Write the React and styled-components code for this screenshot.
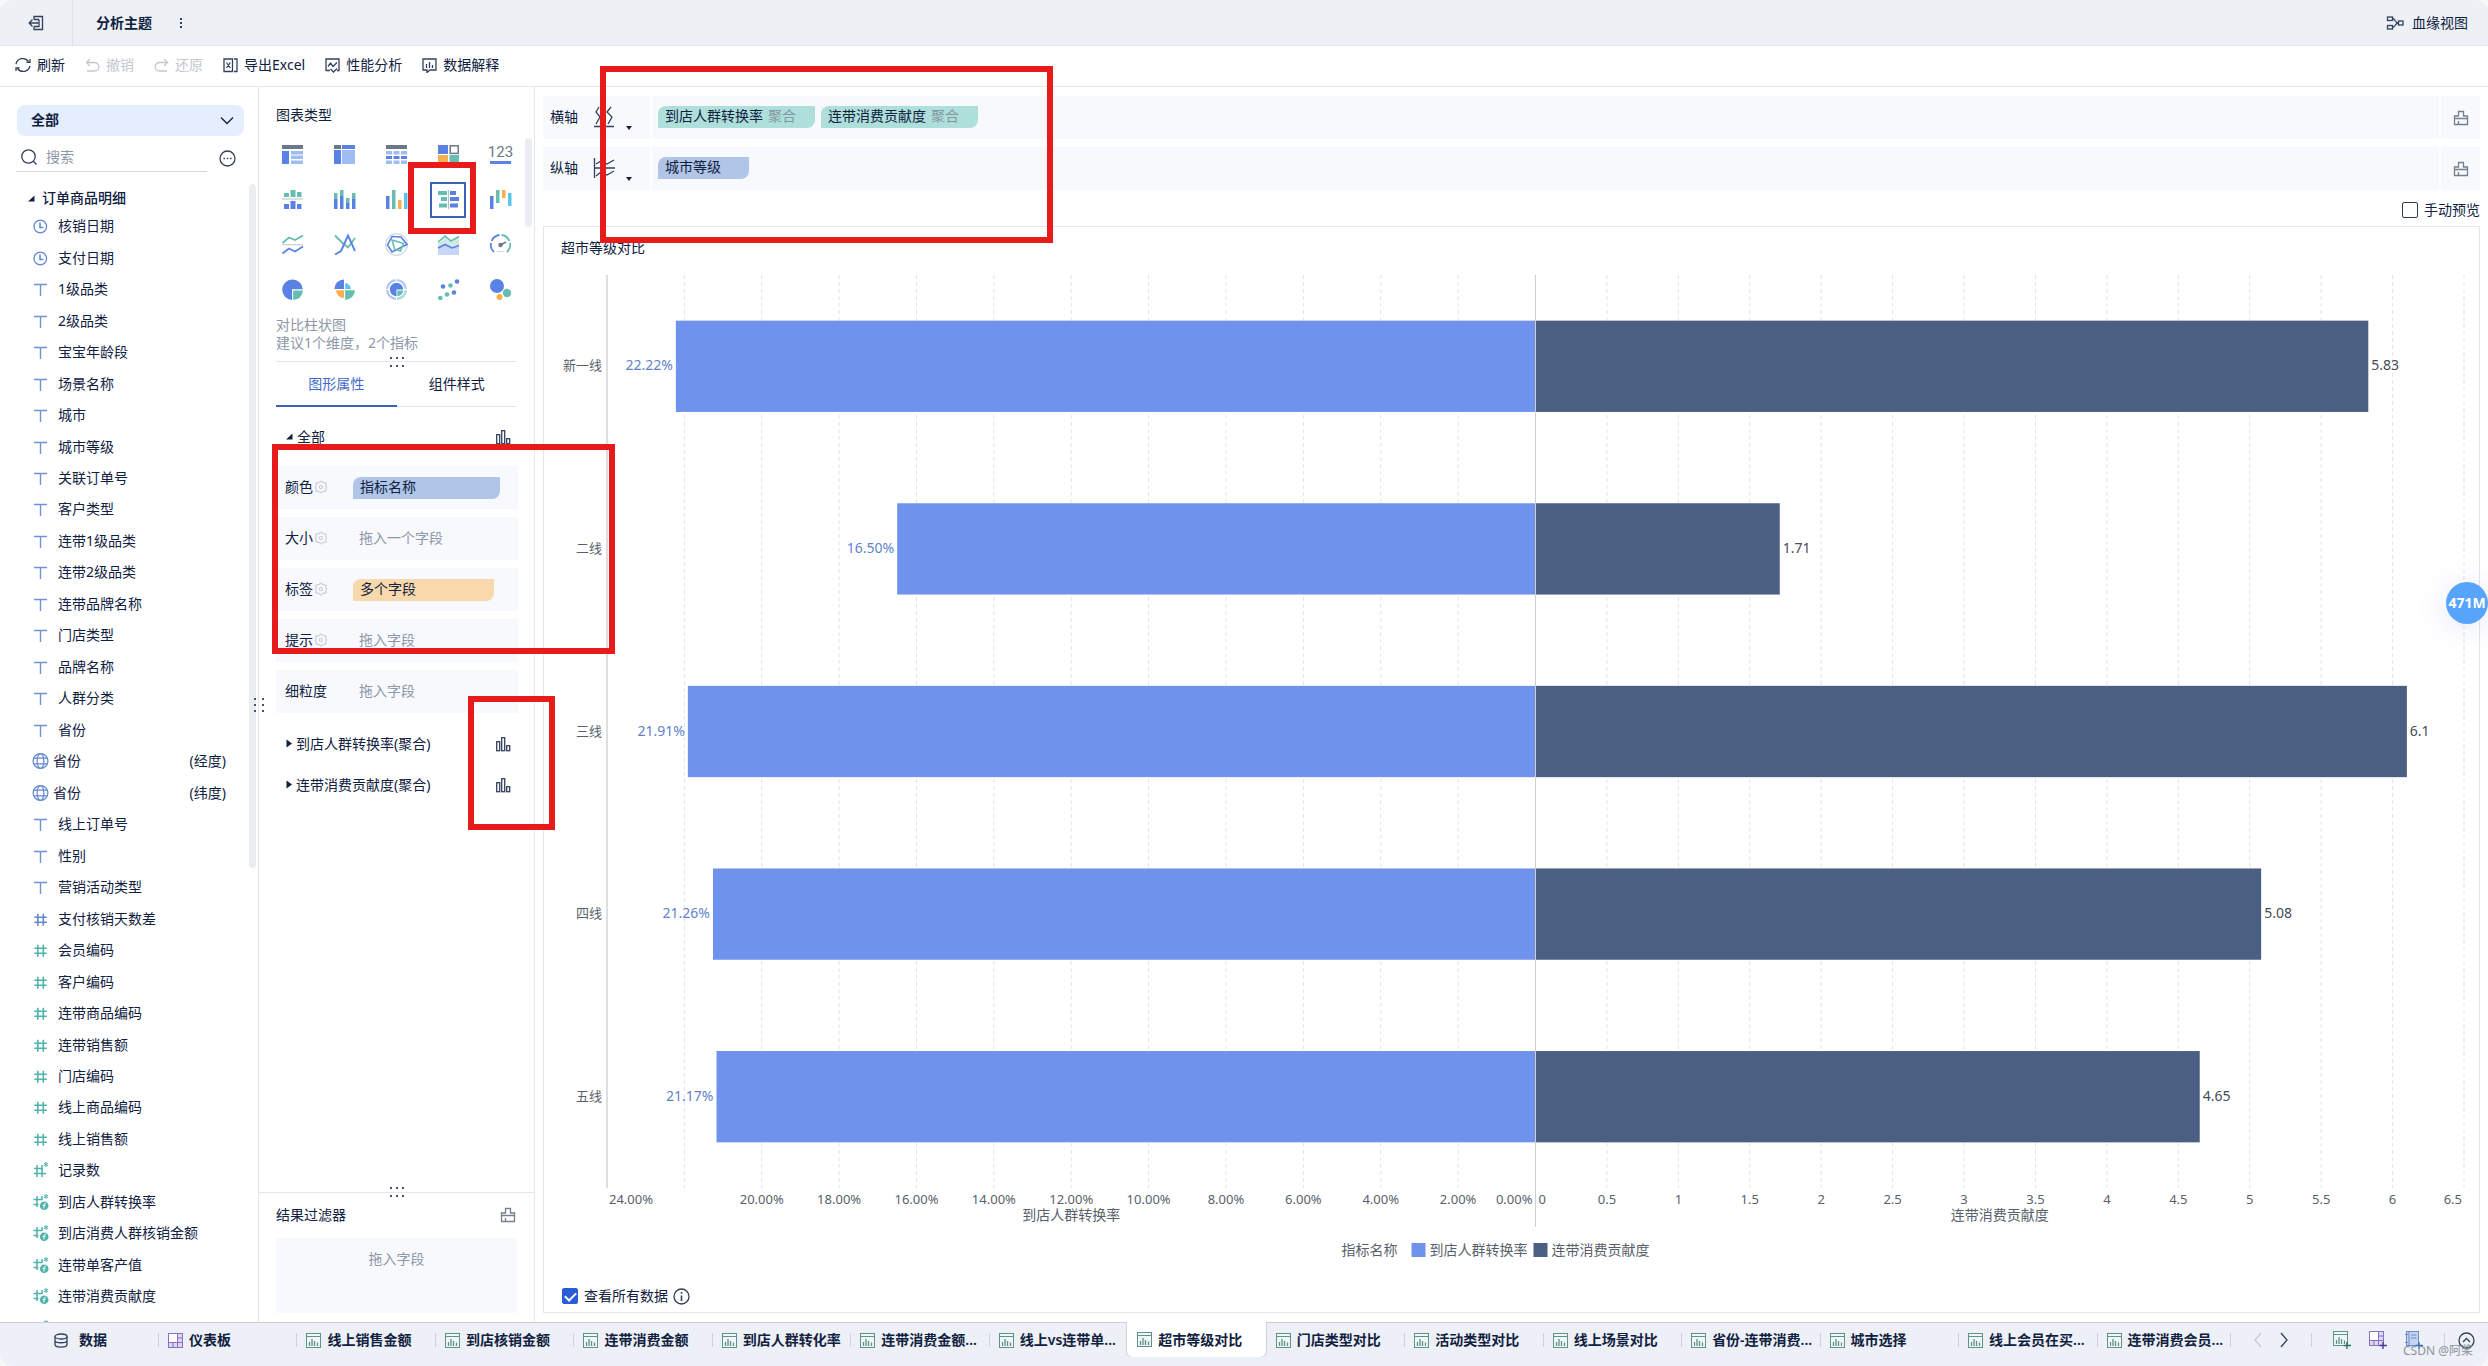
import React, { useLayoutEffect, useRef, useState } from "react";
import styled, { createGlobalStyle, css } from "styled-components";

const ink = "#10213f";
const muted = "#8e97a8";
const line = "#e3e6ea";
const shelfBg = "#f7f9fd";
const blue = "#5a82e4";
const lightBlue = "#9fbdf3";
const teal = "#66beb2";
const orange = "#f6b04f";
const cyan = "#5cc3ea";
const slate = "#6c7889";
const royal = "#3a62b5";
const brandTeal = "#4fb3a9";

const GlobalStyle = createGlobalStyle`
  * { box-sizing: border-box; }
  body { margin: 0; background: #f7f7f8; }
  body, button, input, select {
    font-family: "Noto Sans", "Noto Sans CJK SC", sans-serif;
    font-size: 14px;
    line-height: 20px;
    color: ${ink};
  }
  button, select, input { margin: 0; padding: 0; border: 0; background: none; }
  svg { display: block; flex: none; }
`;

/* ---------- shell ---------- */

const Shell = styled.div`
  position: relative;
  display: flex;
  flex-direction: column;
  height: 100vh;
  overflow: hidden;
  border-radius: 12px;
  background: #fff;
`;

const Header = styled.header`
  display: flex;
  align-items: center;
  height: 46px;
  padding-right: 20px;
  background: #edf0f5;
  border-bottom: 1px solid ${line};
`;

const ExitButton = styled.button`
  display: flex;
  align-items: center;
  align-self: stretch;
  width: 73px;
  padding-left: 28px;
  border-right: 1px solid #dfe4ea;
`;

const Title = styled.h1`
  margin: 0 0 0 23px;
  width: 80px;
  font-size: 14px;
  font-weight: 600;
`;

const HeaderLink = styled.button`
  display: flex;
  align-items: center;
  gap: 8px;
  margin-left: auto;
`;

const Toolbar = styled.nav`
  display: flex;
  align-items: center;
  gap: 20px;
  height: 41px;
  padding: 0 15px 2px;
  border-bottom: 1px solid ${line};
`;

const ToolButton = styled.button`
  display: flex;
  align-items: center;
  gap: 6px;
  color: ${(p) => (p.disabled ? "#c3c8d0" : ink)};
`;

const Body = styled.div`
  display: flex;
  flex: 1;
  min-height: 0;
`;

const Scrollbar = styled.i`
  position: absolute;
  right: ${(p) => p.$right}px;
  top: ${(p) => p.$top}px;
  width: 7px;
  height: ${(p) => p.$size};
  border-radius: 4px;
  background: #ecedf1;
`;

const DotGrip = styled.i`
  position: absolute;
  display: grid;
  grid-template-columns: repeat(${(p) => p.$cols}, 2px);
  gap: 6px 4px;
  ${(p) => p.$place}
  span { width: 2px; height: 2px; background: #45526b; }
`;

/* ---------- field panel ---------- */

const FieldPanel = styled.aside`
  position: relative;
  display: flex;
  flex-direction: column;
  flex: none;
  width: 259px;
  padding-top: 18px;
  border-right: 1px solid ${line};
`;

const ScopeBox = styled.div`
  display: flex;
  align-items: center;
  height: 31px;
  margin: 0 14px 0 17px;
  padding-right: 10px;
  border-radius: 8px;
  background: #e5eefe;
`;

const ScopeSelect = styled.select`
  flex: 1;
  height: 31px;
  padding: 0 0 2px 14px;
  appearance: none;
  font-weight: 600;
`;

const SearchRow = styled.div`
  display: flex;
  align-items: center;
  justify-content: space-between;
  height: 36px;
  margin: 0 22px 0 16px;
`;

const SearchBox = styled.label`
  display: flex;
  align-items: center;
  gap: 9px;
  width: 191px;
  height: 36px;
  padding: 6px 0 0 5px;
  border-bottom: 1px solid #d3d6da;
`;

const SearchInput = styled.input`
  flex: 1;
  min-width: 0;
  outline: none;
  &::placeholder { color: ${muted}; opacity: 1; }
`;

const MoreButton = styled.button`
  margin-top: 8px;
`;

const GroupHead = styled.div`
  display: flex;
  align-items: center;
  gap: 7px;
  margin-top: 16px;
  padding-left: 28px;
  font-weight: 500;
`;

const FieldScroll = styled.div`
  flex: 1;
  min-height: 0;
  margin-top: 3px;
  overflow: hidden;
`;

const FieldList = styled.ul`
  display: grid;
  grid-auto-rows: 1fr;
  height: calc(100% + 22px);
  margin: 0;
  padding: 0 32px 0 32px;
  list-style: none;
`;

const FieldItem = styled.li`
  display: flex;
  align-items: center;
  min-height: 0;
  padding-bottom: 1px;
  gap: ${(p) => (p.$tight ? 3 : 10)}px;
`;

const FieldNote = styled.span`
  margin-left: auto;
`;

/* ---------- config panel ---------- */

const ConfigPanel = styled.section`
  position: relative;
  display: flex;
  flex-direction: column;
  flex: none;
  width: 276px;
  padding-top: 18px;
  border-right: 1px solid ${line};
`;

const PanelTitle = styled.h2`
  margin: 0 17px 7px;
  font-size: 14px;
  font-weight: 400;
`;

const TypeGrid = styled.div`
  display: grid;
  grid-template-columns: repeat(5, 52px);
  grid-auto-rows: 45px;
  place-items: center;
  padding-left: 7px;
`;

const TypeButton = styled.button`
  display: grid;
  place-items: center;
  width: 36px;
  height: 36px;
  ${(p) => p.$active && css`border: 2px solid ${royal};`}
`;

const Hint = styled.p`
  margin: 4px 17px 9px;
  line-height: 18px;
  color: ${muted};
`;

const TabsWrap = styled.div`
  position: relative;
  display: flex;
  flex: none;
  height: 46px;
  margin: 0 17px;
  border-top: 1px solid ${line};
`;

const PropTab = styled.button`
  flex: 1;
  border-bottom: ${(p) => (p.$active ? `2px solid ${royal}` : `1px solid ${line}`)};
  color: ${(p) => (p.$active ? "#3f69c6" : ink)};
`;

const FoldRow = styled.div`
  display: flex;
  align-items: center;
  gap: 4px;
  flex: none;
  height: ${(p) => (p.$large ? 59 : 41)}px;
  padding: 0 23px 0 27px;
  & > svg:last-child { margin-left: auto; }
`;

const ShelfList = styled.div`
  display: grid;
  gap: 8px;
  margin: 0 17px 10px;
`;

const Shelf = styled.div`
  display: grid;
  grid-template-columns: 68px 1fr;
  align-items: center;
  height: 43px;
  padding: 0 18px 0 9px;
  background: ${shelfBg};
`;

const ShelfLabel = styled.span`
  display: flex;
  align-items: center;
  gap: 1px;
  padding-bottom: 2px;
`;

const DropHint = styled.span`
  padding: 0 0 2px 6px;
  color: ${muted};
`;

const pillColors = { blue: "#b0c5e8", amber: "#f8d9ac", teal: "#afdfda" };

const Pill = styled.button`
  width: ${(p) => p.$width}px;
  height: 22px;
  padding: 0 0 2px 7px;
  text-align: left;
  white-space: nowrap;
  border-radius: 8px 0;
  background: ${(p) => pillColors[p.$tone]};
  small { margin-left: 5px; font-size: 14px; color: #8396a3; }
`;

const FilterArea = styled.div`
  position: relative;
  margin-top: auto;
  padding: 12px 17px 9px;
  border-top: 1px solid ${line};
`;

const FilterHead = styled.div`
  display: flex;
  align-items: center;
  justify-content: space-between;
  padding-right: 1px;
`;

const FilterDrop = styled.div`
  height: 75px;
  margin-top: 13px;
  padding-top: 11px;
  text-align: center;
  color: ${muted};
  background: ${shelfBg};
`;

/* ---------- main area ---------- */

const Main = styled.main`
  display: flex;
  flex-direction: column;
  flex: 1;
  min-width: 0;
  padding: 9px 8px;
`;

const AxisRows = styled.div`
  display: grid;
  gap: 8px;
`;

const AxisRow = styled.div`
  display: flex;
  gap: 2px;
  height: 43px;
`;

const AxisHead = styled.div`
  display: flex;
  align-items: center;
  width: 107px;
  padding: 0 0 2px 7px;
  background: ${shelfBg};
  & > svg:nth-of-type(1) { margin-left: 15px; }
  & > svg:nth-of-type(2) { margin: 22px 0 0 11px; }
`;

const AxisFields = styled.div`
  display: flex;
  align-items: center;
  gap: 6px;
  flex: 1;
  padding: 0 0 1px 6px;
  background: ${shelfBg};
`;

const AxisClear = styled.button`
  display: grid;
  place-items: center;
  width: 39px;
  background: ${shelfBg};
`;

const CheckLabel = styled.label`
  display: flex;
  align-items: center;
  gap: 6px;
`;

const Check = styled.input`
  display: grid;
  place-items: center;
  width: 16px;
  height: 16px;
  appearance: none;
  border: 1px solid #2f3c54;
  border-radius: 2px;
  &:checked { border-color: #2b5cd8; background: #2b5cd8; }
  &:checked::after {
    content: "";
    width: 5px;
    height: 9px;
    margin-top: -2px;
    border: solid #fff;
    border-width: 0 2px 2px 0;
    transform: rotate(45deg);
  }
`;

const PreviewRow = styled.div`
  display: flex;
  justify-content: flex-end;
  align-items: center;
  height: 36px;
  padding-top: 4px;
`;

const Card = styled.section`
  display: flex;
  flex-direction: column;
  flex: 1;
  min-height: 0;
  border: 1px solid ${line};
`;

const CardTitle = styled.h2`
  margin: 11px 17px 0;
  font-size: 14px;
  font-weight: 400;
`;

const ChartBox = styled.div`
  flex: 1;
  min-height: 0;
  overflow: hidden;
`;

const CardFoot = styled.div`
  display: flex;
  align-items: center;
  gap: 5px;
  height: 32px;
  padding-left: 18px;
`;

/* ---------- bottom bar ---------- */

const BottomBar = styled.footer`
  display: flex;
  flex: none;
  height: 44px;
  padding-bottom: 9px;
  background: #edf0f6;
  border-top: 1px solid #c9ced9;
`;

const DataTab = styled.button`
  display: flex;
  align-items: center;
  gap: 11px;
  flex: none;
  width: 158px;
  padding-left: 54px;
  font-weight: 600;
`;

const TabClip = styled.div`
  flex: 1;
  min-width: 0;
  overflow: hidden;
  margin-top: -1px;
  padding-top: 1px;
`;

const TabStrip = styled.div`
  display: grid;
  grid-template-columns: repeat(15, minmax(0, 1fr));
  width: calc(100% + 5px);
  height: 34px;
`;

const SheetTab = styled.button`
  display: flex;
  align-items: center;
  gap: 6px;
  min-width: 0;
  font-weight: 600;
  white-space: nowrap;
  &::before {
    content: "";
    width: 1px;
    height: 14px;
    margin-right: 3px;
    background: ${(p) => (p.$active ? "transparent" : "#cdd1d9")};
  }
  ${(p) => p.$active && css`
    margin-top: -1px;
    border-radius: 0 0 6px 6px;
    background: #fff;
    box-shadow: 0 0 1px 1px #cfd3dc;
    clip-path: inset(0 -2px -2px -2px);
  `}
`;

const Divider = styled.i`
  align-self: center;
  flex: none;
  width: 1px;
  height: 14px;
  background: #cdd1d9;
`;

const BarButton = styled.button`
  display: grid;
  place-items: center;
`;

const ToolCluster = styled.div`
  display: flex;
  align-items: center;
  flex: none;
  gap: 18px;
  padding: 0 ${(p) => p.$pad}px;
`;

/* ---------- overlays ---------- */

const Callout = styled.div`
  position: absolute;
  left: ${(p) => p.$x}px;
  top: ${(p) => p.$y}px;
  width: ${(p) => p.$w}px;
  height: ${(p) => p.$h}px;
  border: 6px solid #e81b1b;
  pointer-events: none;
`;

const MemoryBadge = styled.div`
  position: absolute;
  right: 0;
  top: 582px;
  display: grid;
  place-items: center;
  width: 42px;
  height: 42px;
  border-radius: 50%;
  font-weight: 700;
  color: #fff;
  background: #57a5fb;
  box-shadow: 0 4px 30px rgba(110, 120, 220, 0.18);
`;

const Watermark = styled.div`
  position: absolute;
  right: 15px;
  bottom: 6px;
  font-size: 12px;
  line-height: 18px;
  color: #8d929b;
`;

/* ---------- icons ---------- */

const Stroke = ({ w = 16, h = 16, color = "#33415c", sw = 1.3, children, ...rest }) => (
  <svg width={w} height={h} viewBox={`0 0 ${w} ${h}`} fill="none" stroke={color} strokeWidth={sw} {...rest}>
    {children}
  </svg>
);

const Grip = ({ cols, place }) => (
  <DotGrip $cols={cols} $place={place}>
    {Array.from({ length: 6 }, (_, i) => <span key={i} />)}
  </DotGrip>
);

const Brush = () => (
  <Stroke color="#74808f">
    <path d="M1.5 14.5V6H5.5V1.5H10.5V6H14.5V14.5ZM1.5 8.5H14.5M5.5 14.5V11" />
  </Stroke>
);

const BarsIcon = () => (
  <Stroke>
    <rect x="1.7" y="5.7" width="3" height="9" />
    <rect x="6.7" y="1.7" width="3" height="13" />
    <rect x="11.7" y="9.7" width="3" height="5" />
  </Stroke>
);

const Gear = () => (
  <Stroke w={14} h={14} color="#cdd1da" sw={1.2}>
    <path d="M5.3 2.4L7 1L8.700 2.400L12.200 3.300L11.700 5.500L12.800 7L11.700 8.500L12.200 10.700L8.700 11.600L7 13L5.300 11.600L1.800 10.700L2.300 8.500L1.200 7L2.300 5.500L1.800 3.300Z" />
    <circle cx="7" cy="7" r="1.6" />
  </Stroke>
);

const FoldOpen = () => <svg width="7" height="7"><path d="M6.5 0.5V6.5H0Z" fill={ink} /></svg>;
const FoldShut = () => <svg width="6" height="9"><path d="M0.5 0.5L6 4.5L0.5 8.5Z" fill={ink} /></svg>;
const Caret = () => <svg width="6" height="4"><path d="M0 0H6L3 4Z" fill={ink} /></svg>;

const hash = "M5.8 2.800V14.800M11.300 2.800V14.800M2.300 6.300H14.800M2.300 11.300H14.800";

const FieldIcon = ({ kind }) => {
  if (kind === "date")
    return (
      <Stroke color="#6288cf">
        <circle cx="8.3" cy="8.5" r="6.3" />
        <path d="M8 4.5V9.5H11.5" strokeWidth="1.6" />
      </Stroke>
    );
  if (kind === "text")
    return <Stroke color="#6f93d6" sw={1.4}><path d="M2 3.500H15M8.500 3.500V15" /></Stroke>;
  if (kind === "geo")
    return (
      <Stroke w={18} h={18} color="#6288cf" sw={1.2}>
        <circle cx="8.5" cy="9" r="7.4" />
        <ellipse cx="8.5" cy="9" rx="3.4" ry="7.4" />
        <path d="M1.8 6.2H15.2M1.8 11.8H15.2" />
      </Stroke>
    );
  if (kind === "numDim" || kind === "num")
    return <Stroke color={kind === "num" ? brandTeal : "#6288cf"} sw={1.6}><path d={hash} /></Stroke>;
  return (
    <Stroke color={brandTeal} sw={1.5} overflow="visible">
      <path d={kind === "calc" ? "M5 2V13M10 2V6M1.5 5.5H10.5M1.5 10.5H6.5" : "M5 3V15M10 3V15M2 6.5H11M2 11.5H14"} />
      <path d="M14 0V5M11.8 1.2L16.2 3.8M16.2 1.2L11.8 3.8" strokeWidth="1" />
      {kind === "calc" && (
        <>
          <circle cx="12.2" cy="11.8" r="4.3" fill={brandTeal} stroke="none" />
          <path d="M13.8 9.2Q12.4 9 12.2 10.5L11.8 14.5M10.6 11.3H13.6" stroke="#fff" strokeWidth="1" />
        </>
      )}
    </Stroke>
  );
};

const SheetIcon = ({ plus }) => (
  <svg width={plus ? 18 : 15} height={plus ? 18 : 15} fill="none" stroke="#5d9389">
    <rect x="0.5" y="0.5" width="14" height="14" fill="#f1f6f7" />
    <path d="M1 3.5H14" />
    <path d="M3.5 13V9M6 13V6M8.5 13V8M11.5 13V9.5" strokeWidth="1.3" />
    {plus && <path d="M14 11V18M10.5 14.5H18" stroke="#2f6f65" strokeWidth="1.4" />}
  </svg>
);

const BoardIcon = ({ plus }) => (
  <svg width={plus ? 18 : 15} height={plus ? 18 : 15} fill="#ddd6f0" stroke="#8572c4">
    <rect x="0.5" y="0.5" width="14" height="14" />
    <rect x="0.5" y="0.5" width="9" height="9" fill="#fff" />
    <path d="M9.5 5H14.5M9.5 9.5H14.5M5 9.5V14.5M9.5 9.5V14.5" />
    {plus && <path d="M14 11V18M10.5 14.5H18" stroke="#54379d" strokeWidth="1.4" />}
  </svg>
);

const ReportIcon = () => (
  <svg width="18" height="18" fill="#c4d5f2" stroke="#6b8dcb">
    <rect x="1.5" y="0.5" width="12" height="14" />
    <path d="M4 0.5V14.5M6 4H11.5M6 7H11.5M0 3.5H3M0 11.5H3" />
    <path d="M14 11V18M10.5 14.5H18" stroke="#3f69b8" strokeWidth="1.4" />
  </svg>
);

const R = ({ c, d }) => {
  const [x, y, w, h] = d;
  return <rect x={x} y={y} width={w} height={h} fill={c} />;
};

const typeIcons = [
  ["分组表", <>
    <R c={slate} d={[0, 1, 21, 4]} /><R c={blue} d={[0, 7, 7, 13]} />
    {[7, 11.5, 16.5].map((y) => <R key={y} c={lightBlue} d={[9, y, 12, 3.5]} />)}
  </>],
  ["交叉表", <>
    <R c={slate} d={[0, 1, 7, 4]} /><R c={blue} d={[8, 1, 13, 4]} />
    <R c={blue} d={[0, 6, 7, 14]} /><R c={lightBlue} d={[8, 6, 13, 14]} />
  </>],
  ["明细表", <>
    <R c={slate} d={[0, 1, 21, 4]} />
    {[0, 7.5, 15].map((x) => <g key={x}>
      <R c={lightBlue} d={[x, 7, 6, 3.5]} /><R c={blue} d={[x, 12, 6, 3]} /><R c={lightBlue} d={[x, 16.5, 6, 3.5]} />
    </g>)}
  </>],
  ["颜色表格", <>
    <R c={blue} d={[0, 1, 10, 9]} /><rect x="12.2" y="1.8" width="8" height="7.6" fill="none" stroke={slate} strokeWidth="1.5" />
    <R c={orange} d={[0, 11, 10, 9]} /><R c={teal} d={[11.5, 11, 9.5, 9]} />
  </>],
  ["指标卡", <>
    <text x="10.5" y="13" textAnchor="middle" fontFamily="Roboto, sans-serif" fontSize="15" fill={slate}>123</text>
    <R c={blue} d={[0, 17, 21, 3]} />
  </>],
  ["分区柱形图", <>
    <R c={teal} d={[2, 4, 5, 4]} /><R c={teal} d={[8.5, 1, 5, 7]} /><R c={teal} d={[15, 3, 4.5, 5]} />
    <R c="#b8bec8" d={[0, 9.5, 21, 1]} />
    <R c={blue} d={[2, 15, 5, 5]} /><R c={blue} d={[8.5, 12, 5, 8]} /><R c={blue} d={[15, 15, 4.5, 5]} />
  </>],
  ["堆积柱形图", <>
    {[[0, 4, 10], [6, 1, 7], [12, 9, 14], [18, 4, 10]].map(([x, a, b]) => <g key={x}>
      <R c={teal} d={[x, a, 3.5, b - a]} /><R c={blue} d={[x, b, 3.5, 20 - b]} />
    </g>)}
  </>],
  ["多系列柱形图", <>
    <R c={blue} d={[0, 7, 3.5, 13]} /><R c={teal} d={[6, 1, 3.5, 19]} />
    <R c={orange} d={[12, 11, 3.5, 9]} /><R c={cyan} d={[18, 4, 3.5, 16]} />
  </>],
  ["对比柱状图", <>
    <R c={teal} d={[0, 2, 9, 4]} /><R c={teal} d={[3, 8, 6, 4]} /><R c={teal} d={[1, 14.5, 8, 4]} />
    <R c="#b8bec8" d={[10, 1, 1, 19]} />
    <R c={blue} d={[12, 2, 6, 4]} /><R c={blue} d={[12, 8, 9, 4]} /><R c={blue} d={[12, 14.5, 8, 4]} />
  </>],
  ["瀑布图", <>
    <R c={blue} d={[0, 7, 3.5, 13]} /><R c={teal} d={[6, 1, 3.5, 13]} />
    <R c={orange} d={[12, 1, 3.5, 8]} /><R c={cyan} d={[18, 4, 3.5, 13]} />
  </>],
  ["分区折线图", <g fill="none" strokeWidth="1.8">
    <path d="M0.5 9L7 3.5L13 6L21 1.5" stroke={teal} />
    <path d="M0 10.8H21" stroke="#b8bec8" strokeWidth="1" />
    <path d="M0.5 19.5L7 14.5L13 17.5L21 12.5" stroke={blue} />
  </g>],
  ["多系列折线图", <g fill="none" strokeWidth="1.9">
    <path d="M1 1.5L9 9.5L14 13.5L21 4" stroke={teal} />
    <path d="M1 20.5L7 17L14 1.5L21 17" stroke={blue} />
  </g>],
  ["雷达图", <g fill="none" strokeWidth="1.6">
    <circle cx="10.5" cy="10.5" r="10.8" stroke="#cdd8ee" strokeWidth="1.2" />
    <path d="M6 2.5L15 3L21 10.5L12 15L6 18L1.500 11Z" stroke={blue} />
    <path d="M6 6L17.5 9.5L14.5 17L8.500 15Z" stroke={teal} />
  </g>],
  ["面积图", <>
    <path d="M0 8L7 2L13 7L21 2.5V12L13 14L7 10L0 14Z" fill="#cfeae5" />
    <path d="M0 14L7 10.5L14 14L21 11.5V21H0Z" fill="#c6d5f8" />
    <path d="M0 8L7 2L13 7L21 2.5" fill="none" stroke={teal} strokeWidth="1.6" />
    <path d="M0 14L7 10.5L14 14L21 11.5" fill="none" stroke={blue} strokeWidth="1.6" />
  </>],
  ["仪表盘", <g fill="none">
    <path d="M4 18A9.6 9.6 0 0 1 1 9M1.6 7A9.6 9.6 0 0 1 9.5 1" stroke={blue} strokeWidth="1.8" />
    <path d="M11.5 1A9.6 9.6 0 0 1 19.4 7M20 9A9.6 9.6 0 0 1 17 18" stroke={teal} strokeWidth="1.8" />
    <circle cx="10.5" cy="11" r="2.2" fill={slate} /><path d="M10.5 11L16 8" stroke={slate} strokeWidth="1.5" />
    <path d="M7 17.5H14" stroke="#d5dae2" />
  </g>],
  ["饼图", <>
    <path d="M10 11V21A10.3 10.3 0 1 1 20.8 10.2H10Z" fill={blue} />
    <path d="M11.2 11.4H21A10 10 0 0 1 11.2 21Z" fill={teal} />
  </>],
  ["玫瑰图", <>
    <path d="M10 10V0.5A9.7 9.7 0 0 0 0.3 10Z" fill={blue} />
    <path d="M11.2 10V4A6.3 6.3 0 0 1 17 10Z" fill={cyan} />
    <path d="M10 11.3V19A8 8 0 0 1 2 11.3Z" fill={orange} />
    <path d="M11.2 11.3V21A10 10 0 0 0 21 11.3Z" fill={teal} />
  </>],
  ["多层饼图", <>
    <circle cx="10.5" cy="10.5" r="9.4" fill="none" stroke="#b4c6f2" strokeWidth="2.2" />
    <path d="M11 19.9A9.4 9.4 0 0 0 19.9 11" fill="none" stroke="#b5ded8" strokeWidth="2.2" />
    <path d="M10.5 0V3M10.5 18V21M0 10.5H3M18 10.5H21" stroke="#fff" strokeWidth="1" />
    <path d="M10.5 11V17.2A6.7 6.7 0 1 1 17.2 10.5H10.5Z" fill={blue} />
    <path d="M11.3 11.4H17.2A6.3 6.3 0 0 1 11.3 17.2Z" fill={teal} />
  </>],
  ["散点图", <>
    {[[5, 7.5], [19, 2.5], [16, 13.5]].map(([x, y]) => <circle key={x} cx={x} cy={y} r="2.3" fill={blue} />)}
    {[[12.5, 6.5], [9, 15.5], [2.3, 19]].map(([x, y]) => <circle key={x} cx={x} cy={y} r="2.3" fill={teal} />)}
  </>],
  ["气泡图", <>
    <circle cx="7" cy="7" r="7" fill={blue} /><circle cx="17" cy="14" r="4.2" fill={teal} /><circle cx="9.5" cy="18" r="3" fill={orange} />
  </>],
];

/* ---------- chart ---------- */

const rows = [
  ["新一线", 22.22, 5.83],
  ["二线", 16.5, 1.71],
  ["三线", 21.91, 6.1],
  ["四线", 21.26, 5.08],
  ["五线", 21.17, 4.65],
];

function useSize(ref) {
  const [size, setSize] = useState([0, 0]);
  useLayoutEffect(() => {
    const measure = () => setSize([ref.current.clientWidth, ref.current.clientHeight]);
    measure();
    const ob = new ResizeObserver(measure);
    ob.observe(ref.current);
    return () => ob.disconnect();
  }, [ref]);
  return size;
}

function Chart() {
  const ref = useRef(null);
  const [w, h] = useSize(ref);
  const left = 63;
  const right = w - 15;
  const mid = (left + right) / 2;
  const top = 17;
  const bottom = h - 92;
  const band = (bottom - top) / rows.length;
  const half = mid - left;
  const lx = (v) => mid - (v / 24) * half;
  const rx = (v) => mid + (v / 6.5) * half;
  const tick = { fontSize: 13, fill: "#595f6b" };
  const label = { fontSize: 14, fill: "#595f6b" };
  const dash = { stroke: "#e2e3e5", strokeDasharray: "4 3" };
  const leftTicks = Array.from({ length: 12 }, (_, i) => (i + 1) * 2);
  const rightTicks = Array.from({ length: 13 }, (_, i) => (i + 1) / 2);
  return (
    <ChartBox ref={ref}>
      {w > 0 && (
        <svg width={w} height={h} role="img" aria-label="超市等级对比" fontFamily='"Noto Sans", "Noto Sans CJK SC", sans-serif'>
          {leftTicks.slice(0, -1).map((t) => <line key={t} x1={lx(t)} x2={lx(t)} y1={top} y2={bottom} {...dash} />)}
          {rightTicks.map((t) => <line key={t} x1={rx(t)} x2={rx(t)} y1={top} y2={bottom} {...dash} />)}
          <line x1={left} x2={left} y1={top} y2={bottom} stroke="#dededf" strokeWidth="2" />
          {rows.map(([name, a, b], i) => {
            const cy = top + band * (i + 0.5);
            const y = cy - band / 4;
            return (
              <g key={name}>
                <rect x={lx(a)} y={y} width={mid - lx(a)} height={band / 2} fill="#6f93ec" />
                <rect x={mid} y={y} width={rx(b) - mid} height={band / 2} fill="#4b5f83" />
                <text x={left - 5} y={cy + 4} textAnchor="end" {...tick}>{name}</text>
                <text x={lx(a) - 3} y={cy + 4} textAnchor="end" fontSize="14" fill="#5f82cb">{a.toFixed(2)}%</text>
                <text x={rx(b) + 3} y={cy + 4} fontSize="14" fill="#454b57">{b}</text>
              </g>
            );
          })}
          <line x1={mid} x2={mid} y1={top} y2={bottom + 39} stroke="#cfcfd1" />
          <text x={left + 2} y={bottom + 16} {...tick}>24.00%</text>
          {leftTicks.slice(0, 10).map((t) => (
            <text key={t} x={lx(t)} y={bottom + 16} textAnchor="middle" {...tick}>{t.toFixed(2)}%</text>
          ))}
          <text x={mid - 3} y={bottom + 16} textAnchor="end" {...tick}>0.00%</text>
          <text x={mid + 3} y={bottom + 16} {...tick}>0</text>
          {rightTicks.slice(0, -1).map((t) => (
            <text key={t} x={rx(t)} y={bottom + 16} textAnchor="middle" {...tick}>{t}</text>
          ))}
          <text x={right - 2} y={bottom + 16} textAnchor="end" {...tick}>6.5</text>
          <text x={(left + mid) / 2} y={bottom + 32} textAnchor="middle" {...label}>到店人群转换率</text>
          <text x={(right + mid) / 2} y={bottom + 32} textAnchor="middle" {...label}>连带消费贡献度</text>
          <g {...label}>
            <text x={mid - 194} y={h - 25}>指标名称</text>
            <rect x={mid - 124} y={h - 37} width="14" height="14" fill="#6f93ec" />
            <text x={mid - 106} y={h - 25}>到店人群转换率</text>
            <rect x={mid - 2} y={h - 37} width="14" height="14" fill="#4b5f83" />
            <text x={mid + 16} y={h - 25}>连带消费贡献度</text>
          </g>
        </svg>
      )}
    </ChartBox>
  );
}

/* ---------- data ---------- */

const fields = [
  ["date", "核销日期"], ["date", "支付日期"], ["text", "1级品类"], ["text", "2级品类"],
  ["text", "宝宝年龄段"], ["text", "场景名称"], ["text", "城市"], ["text", "城市等级"],
  ["text", "关联订单号"], ["text", "客户类型"], ["text", "连带1级品类"], ["text", "连带2级品类"],
  ["text", "连带品牌名称"], ["text", "门店类型"], ["text", "品牌名称"], ["text", "人群分类"],
  ["text", "省份"], ["geo", "省份", "(经度)"], ["geo", "省份", "(纬度)"], ["text", "线上订单号"],
  ["text", "性别"], ["text", "营销活动类型"], ["numDim", "支付核销天数差"], ["num", "会员编码"],
  ["num", "客户编码"], ["num", "连带商品编码"], ["num", "连带销售额"], ["num", "门店编码"],
  ["num", "线上商品编码"], ["num", "线上销售额"], ["count", "记录数"], ["calc", "到店人群转换率"],
  ["calc", "到店消费人群核销金额"], ["calc", "连带单客产值"], ["calc", "连带消费贡献度"], ["calc", ""],
];

const sheets = [
  "仪表板", "线上销售金额", "到店核销金额", "连带消费金额", "到店人群转化率", "连带消费金额...",
  "线上vs连带单...", "超市等级对比", "门店类型对比", "活动类型对比", "线上场景对比",
  "省份-连带消费...", "城市选择", "线上会员在买...", "连带消费会员...",
];

const shelves = [
  { label: "颜色", gear: true, pill: "指标名称", tone: "blue", width: 147 },
  { label: "大小", gear: true, hint: "拖入一个字段" },
  { label: "标签", gear: true, pill: "多个字段", tone: "amber", width: 141 },
  { label: "提示", gear: true, hint: "拖入字段" },
  { label: "细粒度", hint: "拖入字段" },
];

export default function App() {
  return (
    <Shell>
      <GlobalStyle />
      <Header>
        <ExitButton aria-label="退出">
          <Stroke><path d="M6 4.500V1.500H14.500V14.500H6V11.500M11.500 8H1.500M4.500 4.500L1.200 8L4.500 11.500M11 4.500H6M11 4.500V11.500H6" /></Stroke>
        </ExitButton>
        <Title>分析主题</Title>
        <button aria-label="更多">
          <svg width="10" height="14" fill="#33415c"><rect x="4" y="2" width="2" height="2" /><rect x="4" y="6" width="2" height="2" /><rect x="4" y="10" width="2" height="2" /></svg>
        </button>
        <HeaderLink>
          <Stroke w={18} h={16}>
            <rect x="1.5" y="2" width="5" height="3.5" /><rect x="1.5" y="10.5" width="5" height="3.5" /><rect x="12.5" y="6" width="4.5" height="4" />
            <path d="M6.5 3.5C10 4 8.5 8 12.5 8M6.5 12.5C10 12 8.5 8 12.5 8" />
          </Stroke>
          血缘视图
        </HeaderLink>
      </Header>

      <Toolbar>
        <ToolButton>
          <Stroke w={16} h={16}><path d="M1 7A7 7 0 0 1 13.5 4.500M15 2V5.300H11.500M15 9A7 7 0 0 1 2.500 11.500M1 14V10.800H4.500" /></Stroke>刷新
        </ToolButton>
        <ToolButton disabled>
          <Stroke w={15} h={16} color="#c3c8d0"><path d="M5 2L1.5 5.5L5 9M1.5 5.5H9.5A4 4 0 0 1 9.5 14H2" /></Stroke>撤销
        </ToolButton>
        <ToolButton disabled>
          <Stroke w={15} h={16} color="#c3c8d0"><path d="M10 2L13.5 5.5L10 9M13.5 5.5H5.5A4 4 0 0 0 5.5 14H13" /></Stroke>还原
        </ToolButton>
        <ToolButton>
          <Stroke w={15} h={16}><path d="M1 2H9.500V14.500H1ZM11 2H14V14.500H11M3.500 5.500L7.300 11M7.300 5.500L3.500 11" /></Stroke>导出Excel
        </ToolButton>
        <ToolButton>
          <Stroke w={15} h={16}><path d="M5 13.500H1V2H14V13.500H12M3 9.500L5.500 6L8 9.500L12 5.500M5.500 12L8.500 15L12 11.500" /></Stroke>性能分析
        </ToolButton>
        <ToolButton>
          <Stroke w={15} h={16}><path d="M4 13H1V2H14V13H8L5 15.5V13ZM4.5 11V7M7.5 11V5M10.5 11V8" /></Stroke>数据解释
        </ToolButton>
      </Toolbar>

      <Body>
        <FieldPanel>
          <ScopeBox>
            <ScopeSelect aria-label="数据范围"><option>全部</option></ScopeSelect>
            <Stroke w={14} h={9} color={ink}><path d="M1 1.5L7 7.5L13 1.5" /></Stroke>
          </ScopeBox>
          <SearchRow>
            <SearchBox>
              <Stroke><circle cx="7.5" cy="7.5" r="6.700" /><path d="M12 12L15.5 15.5" /></Stroke>
              <SearchInput placeholder="搜索" aria-label="搜索" />
            </SearchBox>
            <MoreButton aria-label="更多选项">
              <Stroke w={17} h={17}><circle cx="8.5" cy="8.5" r="7.5" /><path d="M4.5 8.5H13" strokeDasharray="1.5 1.8" /></Stroke>
            </MoreButton>
          </SearchRow>
          <GroupHead><FoldOpen />订单商品明细</GroupHead>
          <FieldScroll>
            <FieldList>
              {fields.map(([kind, name, note], i) => (
                <FieldItem key={i} $tight={kind === "geo"}>
                  <FieldIcon kind={kind} />
                  <span>{name}</span>
                  {note && <FieldNote>{note}</FieldNote>}
                </FieldItem>
              ))}
            </FieldList>
          </FieldScroll>
          <Scrollbar $right={2} $top={97} $size="calc(100% - 551px)" />
          <Grip cols={2} place={css`right: -6px; top: 611px; gap: 4px 6px; z-index: 1;`} />
        </FieldPanel>

        <ConfigPanel>
          <PanelTitle>图表类型</PanelTitle>
          <TypeGrid>
            {typeIcons.map(([name, art]) => (
              <TypeButton key={name} aria-label={name} $active={name === "对比柱状图"}>
                <svg width="21" height="21" overflow="visible">{art}</svg>
              </TypeButton>
            ))}
          </TypeGrid>
          <Hint>对比柱状图<br />建议1个维度，2个指标</Hint>
          <TabsWrap>
            <PropTab $active>图形属性</PropTab>
            <PropTab>组件样式</PropTab>
            <Grip cols={3} place={css`left: 114px; top: -5px;`} />
          </TabsWrap>
          <FoldRow $large><FoldOpen />全部<BarsIcon /></FoldRow>
          <ShelfList>
            {shelves.map((s) => (
              <Shelf key={s.label}>
                <ShelfLabel>{s.label}{s.gear && <Gear />}</ShelfLabel>
                {s.pill ? <Pill $tone={s.tone} $width={s.width}>{s.pill}</Pill> : <DropHint>{s.hint}</DropHint>}
              </Shelf>
            ))}
          </ShelfList>
          <FoldRow><FoldShut />到店人群转换率(聚合)<BarsIcon /></FoldRow>
          <FoldRow><FoldShut />连带消费贡献度(聚合)<BarsIcon /></FoldRow>
          <FilterArea>
            <Grip cols={3} place={css`left: 131px; top: -6px;`} />
            <FilterHead>结果过滤器<Brush /></FilterHead>
            <FilterDrop>拖入字段</FilterDrop>
          </FilterArea>
          <Scrollbar $right={2} $top={51} $size="89px" />
        </ConfigPanel>

        <Main>
          <AxisRows>
            <AxisRow>
              <AxisHead>
                横轴
                <Stroke w={22} h={22}><path d="M1 20.5H21M6 1L3 6L7 11L3 18M18 1L14 6L19 11L15 18" /></Stroke>
                <Caret />
              </AxisHead>
              <AxisFields>
                <Pill $tone="teal" $width={157}>到店人群转换率<small>聚合</small></Pill>
                <Pill $tone="teal" $width={157}>连带消费贡献度<small>聚合</small></Pill>
              </AxisFields>
              <AxisClear aria-label="清空横轴"><Brush /></AxisClear>
            </AxisRow>
            <AxisRow>
              <AxisHead>
                纵轴
                <Stroke w={22} h={22}><path d="M1.5 1V21M1.5 11H22M3 7L8 4L14 7L21 3M3 19L8 15L14 18L21 14" /></Stroke>
                <Caret />
              </AxisHead>
              <AxisFields><Pill $tone="blue" $width={91}>城市等级</Pill></AxisFields>
              <AxisClear aria-label="清空纵轴"><Brush /></AxisClear>
            </AxisRow>
          </AxisRows>
          <PreviewRow>
            <CheckLabel><Check type="checkbox" />手动预览</CheckLabel>
          </PreviewRow>
          <Card>
            <CardTitle>超市等级对比</CardTitle>
            <Chart />
            <CardFoot>
              <CheckLabel><Check type="checkbox" defaultChecked />查看所有数据</CheckLabel>
              <Stroke w={17} h={17}><circle cx="8.5" cy="8.5" r="7.5" /><path d="M8.5 7.5V13M8.5 4V5.8" strokeWidth="1.6" /></Stroke>
            </CardFoot>
          </Card>
        </Main>
      </Body>

      <BottomBar>
        <DataTab>
          <Stroke w={14} h={15}><ellipse cx="7" cy="3.5" rx="6" ry="2.5" /><path d="M1 3.5V11.5C1 15 13 15 13 11.5V3.5M1 7.5C1 10.5 13 10.5 13 7.5" /></Stroke>
          数据
        </DataTab>
        <TabClip>
          <TabStrip>
            {sheets.map((s, i) => (
              <SheetTab key={i} $active={s === "超市等级对比"}>
                {i === 0 ? <BoardIcon /> : <SheetIcon />}
                {s}
              </SheetTab>
            ))}
          </TabStrip>
        </TabClip>
        <Divider />
        <ToolCluster $pad={22}>
          <BarButton aria-label="上一页"><Stroke w={9} h={16} color="#c6cad3"><path d="M8 1L2 8L8 15" /></Stroke></BarButton>
          <BarButton aria-label="下一页"><Stroke w={9} h={16}><path d="M1 1L7 8L1 15" /></Stroke></BarButton>
        </ToolCluster>
        <Divider />
        <ToolCluster $pad={21}>
          <BarButton aria-label="新建组件"><SheetIcon plus /></BarButton>
          <BarButton aria-label="新建仪表板"><BoardIcon plus /></BarButton>
          <BarButton aria-label="新建报告"><ReportIcon /></BarButton>
        </ToolCluster>
        <Divider />
        <ToolCluster $pad={13}>
          <BarButton aria-label="展开"><Stroke w={17} h={17}><circle cx="8.5" cy="8.5" r="7.5" /><path d="M5 10L8.5 6.5L12 10" /></Stroke></BarButton>
        </ToolCluster>
      </BottomBar>

      <Callout $x={600} $y={66} $w={453} $h={177} />
      <Callout $x={408} $y={162} $w={68} $h={72} />
      <Callout $x={272} $y={444} $w={343} $h={210} />
      <Callout $x={468} $y={696} $w={87} $h={134} />
      <MemoryBadge>471M</MemoryBadge>
      <Watermark>CSDN @阿桨</Watermark>
    </Shell>
  );
}
